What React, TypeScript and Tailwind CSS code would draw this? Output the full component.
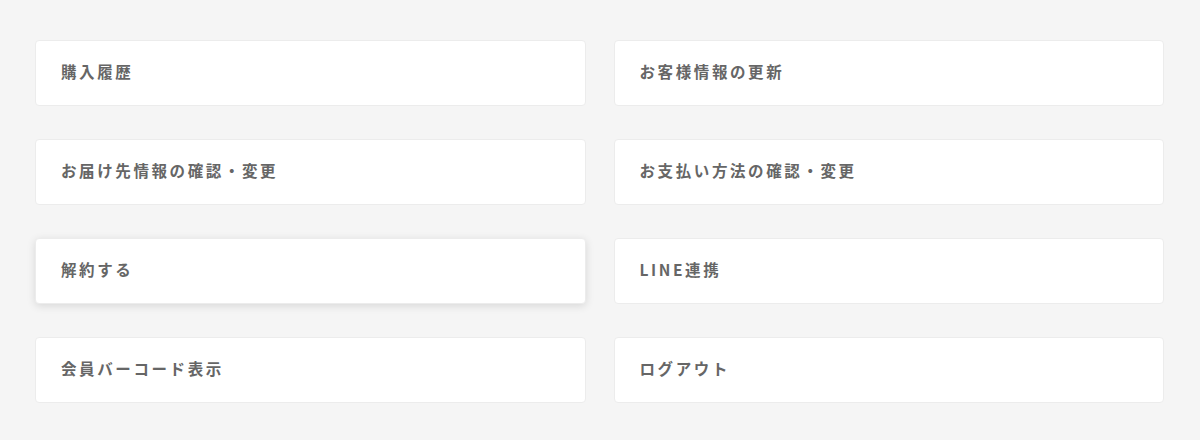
import React from "react";

const items: { label: string; hover?: boolean }[] = [
  { label: "購入履歴" },
  { label: "お客様情報の更新" },
  { label: "お届け先情報の確認・変更" },
  { label: "お支払い方法の確認・変更" },
  { label: "解約する", hover: true },
  { label: "LINE連携" },
  { label: "会員バーコード表示" },
  { label: "ログアウト" },
];

export default function App() {
  return (
    <div
      className="min-h-[440px] w-full bg-[#f5f5f5] pl-[35px] pr-[36px] pt-[40px] pb-[37px]"
      style={{ fontFamily: '"Noto Sans CJK JP", "Noto Sans", sans-serif' }}
    >
      <div className="grid grid-cols-2 gap-x-[28px] gap-y-[33px]">
        {items.map((it) => (
          <a
            key={it.label}
            href="#"
            className={
              it.hover
                ? "flex h-[66px] items-center rounded-[4px] border border-[#ececec] bg-white pb-[2px] pl-[25px] text-[15.5px] font-bold tracking-[2.6px] text-[#666] shadow-[0_2px_8px_rgba(0,0,0,0.12)]"
                : "flex h-[66px] items-center rounded-[4px] border border-[#ececec] bg-white pb-[2px] pl-[25px] text-[15.5px] font-bold tracking-[2.6px] text-[#666]"
            }
          >
            {it.label}
          </a>
        ))}
      </div>
    </div>
  );
}
